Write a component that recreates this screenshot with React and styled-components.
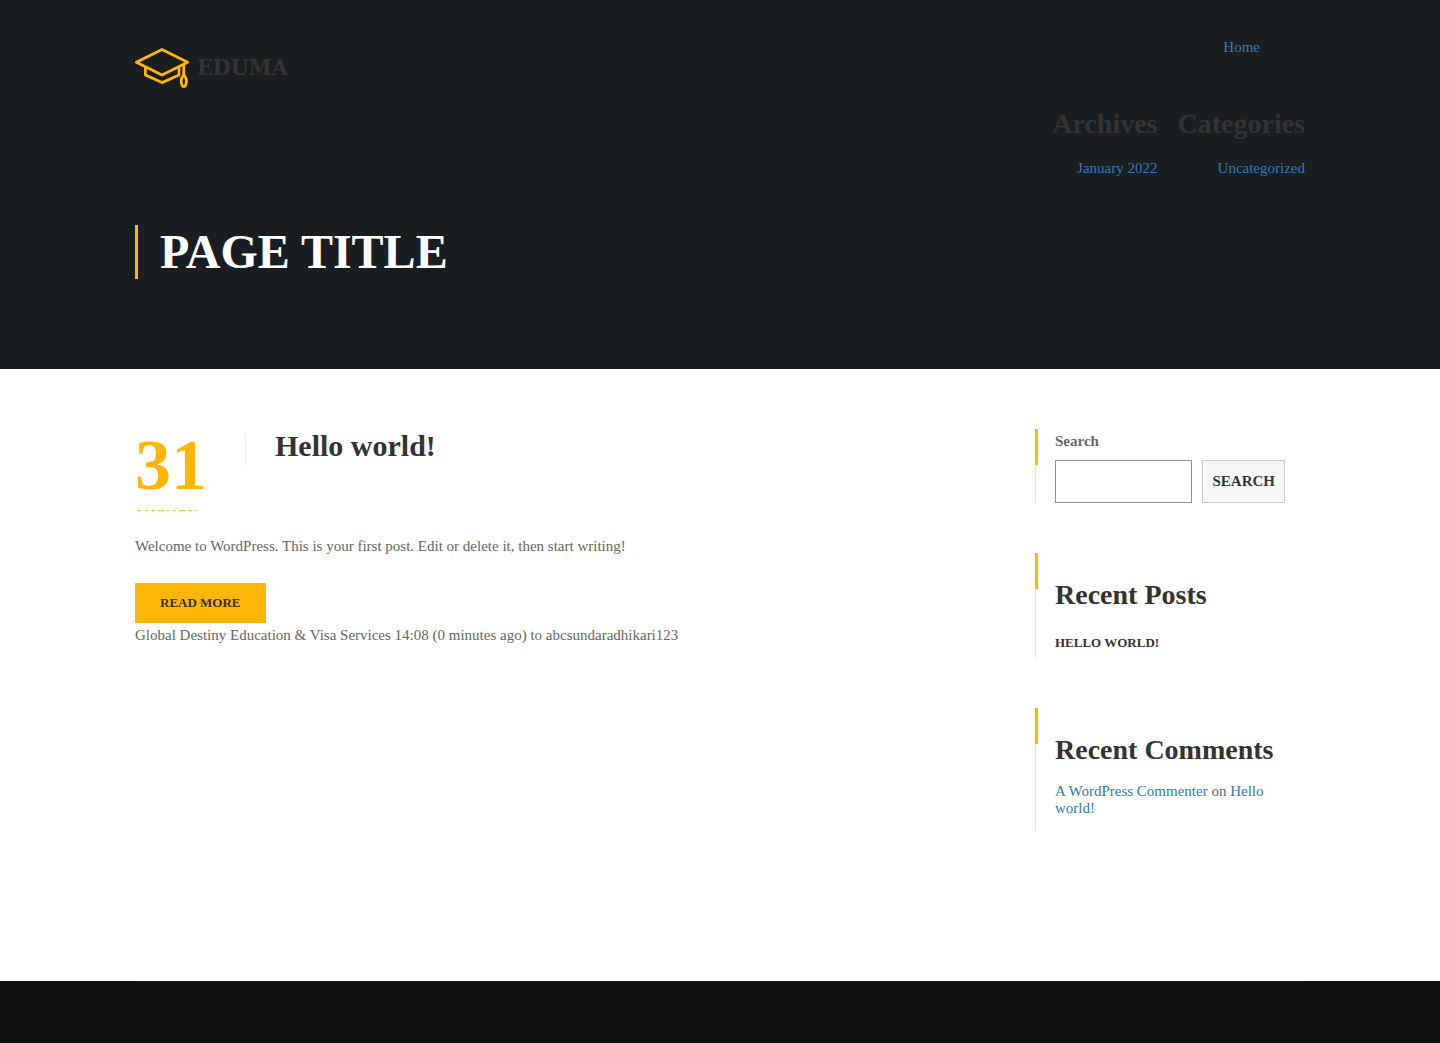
import React from "react";
import styled, { createGlobalStyle } from "styled-components";

const GlobalStyle = createGlobalStyle`
  *, *::before, *::after { box-sizing: border-box; }
  body {
    margin: 0;
    background: #fff;
    color: #666;
    font-family: "Liberation Serif", "Times New Roman", serif;
    font-size: 15px;
    line-height: 17px;
  }
  h1, h2, h3, p, ul { margin: 0; padding: 0; }
  ul { list-style: none; }
`;

const Page = styled.div`
  display: flex;
  flex-direction: column;
  min-height: 100vh;
`;

const Container = styled.div`
  width: 100%;
  max-width: 1200px;
  margin: 0 auto;
  padding: 0 15px;
`;

const Header = styled.header`
  background: #1b1e21;
  padding: 39px 0 90px;
`;

const TopBar = styled.div`
  display: flex;
  justify-content: space-between;
  align-items: flex-start;
`;

const Logo = styled.a`
  display: flex;
  align-items: flex-start;
  gap: 8px;
  padding-top: 9px;
  color: #333;
  font-family: "DejaVu Serif Condensed", "DejaVu Serif", serif;
  font-stretch: condensed;
  font-size: 23px;
  font-weight: 700;
  line-height: 38px;
  text-decoration: none;
`;

const Nav = styled.nav`
  display: flex;
  flex-direction: column;
  align-items: flex-end;
  gap: 52px;
`;

const Link = styled.a`
  color: #337ab7;
  text-decoration: none;
`;

const MenuList = styled.ul`
  padding-right: 45px;
`;

const MenuColumns = styled.div`
  display: flex;
  gap: 20px;
  text-align: right;
`;

const Heading = styled.h2`
  color: #333;
  font-size: 28px;
  font-weight: 700;
  line-height: 32px;
  margin-bottom: ${(p) => (p.$menu ? 20 : 17)}px;
`;

const PageTitle = styled.h1`
  margin-top: 48px;
  padding-left: 22px;
  border-left: 3px solid #ffb606;
  color: #fff;
  font-size: 48px;
  line-height: 54px;
  text-transform: uppercase;
`;

const Content = styled(Container)`
  display: flex;
  justify-content: space-between;
  gap: 30px;
  padding-top: 60px;
  padding-bottom: 100px;
`;

const Posts = styled.main`
  flex: 1;
  min-width: 0;
`;

const EntryHead = styled.header`
  display: flex;
  align-items: flex-start;
  margin-bottom: 27px;
`;

const EntryDate = styled.time`
  width: 110px;
  height: 82px;
  overflow: hidden;
  color: #ffb606;
  font-weight: 700;
  text-transform: uppercase;
`;

const Day = styled.span`
  display: block;
  font-size: 72px;
  line-height: 72px;
`;

const Month = styled.span`
  display: block;
  font-size: 13px;
  line-height: 26px;
`;

const EntryTitle = styled.h2`
  height: 32px;
  margin-top: 4px;
  padding-left: 29px;
  border-left: 1px solid #eee;
  color: #333;
  font-size: 30px;
  line-height: 26px;

  a {
    color: inherit;
    text-decoration: none;
  }
`;

const ReadMore = styled.a`
  display: block;
  width: fit-content;
  margin: 28px 0 4px;
  padding: 0 25px;
  background: #ffb606;
  color: #333;
  font-size: 13px;
  font-weight: 700;
  line-height: 40px;
  text-decoration: none;
  text-transform: uppercase;
`;

const Sidebar = styled.aside`
  width: 270px;
  flex: none;
`;

const Widget = styled.section`
  position: relative;
  margin-bottom: 50px;
  padding: 0 20px ${(p) => p.$bottom || 0}px 19px;
  border-left: 1px solid #e5e5e5;

  &::before {
    content: "";
    position: absolute;
    top: 0;
    left: -1px;
    width: 3px;
    height: 36px;
    background: #ffb606;
  }

  ${Heading} {
    padding-top: 26px;
  }
`;

const SearchLabel = styled.label`
  display: block;
  margin-bottom: 7px;
  font-weight: 700;
  line-height: 24px;
`;

const SearchRow = styled.div`
  display: flex;
  gap: 10px;
  height: 43px;
`;

const SearchInput = styled.input`
  flex: 1;
  min-width: 0;
  padding: 4px 8px;
  border: 1px solid #949494;
  border-radius: 0;
  background: #fff;
  font: inherit;
`;

const SearchButton = styled.button`
  padding: 0 9px;
  border: 1px solid #ccc;
  border-radius: 0;
  background: #f7f7f7;
  color: #32373c;
  font: inherit;
  font-weight: 700;
  text-transform: uppercase;
`;

const PostLink = styled.a`
  display: block;
  color: #333;
  font-size: 13px;
  font-weight: 700;
  line-height: 30px;
  text-decoration: none;
  text-transform: uppercase;
`;

const Footer = styled.footer`
  flex: 1;
  min-height: 62px;
  background: #111;
`;

const FooterRule = styled.div`
  border-top: 1px solid #222;
`;

function CapIcon() {
  return (
    <svg width="54" height="40" viewBox="0 0 54 40" fill="none" stroke="#ffb606" strokeWidth="2.8" strokeLinejoin="round" aria-hidden="true">
      <path d="M1.4 14.2 27 1.5 52.6 14.2 27 27Z" />
      <path d="M10.4 18.8V27L27 34.6 44 27V18.8" />
      <path d="M48.8 16V26.5" />
      <path d="M48.8 26.5C46 30 45.4 34.5 47.6 38.4H50C52.2 34.5 51.6 30 48.8 26.5Z" />
    </svg>
  );
}

export default function App() {
  return (
    <>
      <GlobalStyle />
      <Page>
        <Header>
          <Container>
            <TopBar>
              <Logo href="#">
                <CapIcon />
                <span>EDUMA</span>
              </Logo>
              <Nav>
                <MenuList>
                  <li><Link href="#">Home</Link></li>
                </MenuList>
                <MenuColumns>
                  <div>
                    <Heading $menu>Archives</Heading>
                    <ul><li><Link href="#">January 2022</Link></li></ul>
                  </div>
                  <div>
                    <Heading $menu>Categories</Heading>
                    <ul><li><Link href="#">Uncategorized</Link></li></ul>
                  </div>
                </MenuColumns>
              </Nav>
            </TopBar>
            <PageTitle>Page title</PageTitle>
          </Container>
        </Header>
        <Content>
          <Posts>
            <article>
              <EntryHead>
                <EntryDate dateTime="2022-01-31">
                  <Day>31</Day>
                  <Month>January</Month>
                </EntryDate>
                <EntryTitle><a href="#">Hello world!</a></EntryTitle>
              </EntryHead>
              <p>Welcome to WordPress. This is your first post. Edit or delete it, then start writing!</p>
              <ReadMore href="#">Read More</ReadMore>
            </article>
            <p>Global Destiny Education &amp; Visa Services 14:08 (0 minutes ago) to abcsundaradhikari123</p>
          </Posts>
          <Sidebar>
            <Widget>
              <form role="search" onSubmit={(e) => e.preventDefault()}>
                <SearchLabel htmlFor="search">Search</SearchLabel>
                <SearchRow>
                  <SearchInput id="search" type="search" />
                  <SearchButton type="submit">Search</SearchButton>
                </SearchRow>
              </form>
            </Widget>
            <Widget>
              <Heading>Recent Posts</Heading>
              <PostLink href="#">Hello world!</PostLink>
            </Widget>
            <Widget $bottom={14}>
              <Heading>Recent Comments</Heading>
              <p><Link href="#">A WordPress Commenter</Link> on <Link href="#">Hello world!</Link></p>
            </Widget>
          </Sidebar>
        </Content>
        <Footer>
          <Container><FooterRule /></Container>
        </Footer>
      </Page>
    </>
  );
}
